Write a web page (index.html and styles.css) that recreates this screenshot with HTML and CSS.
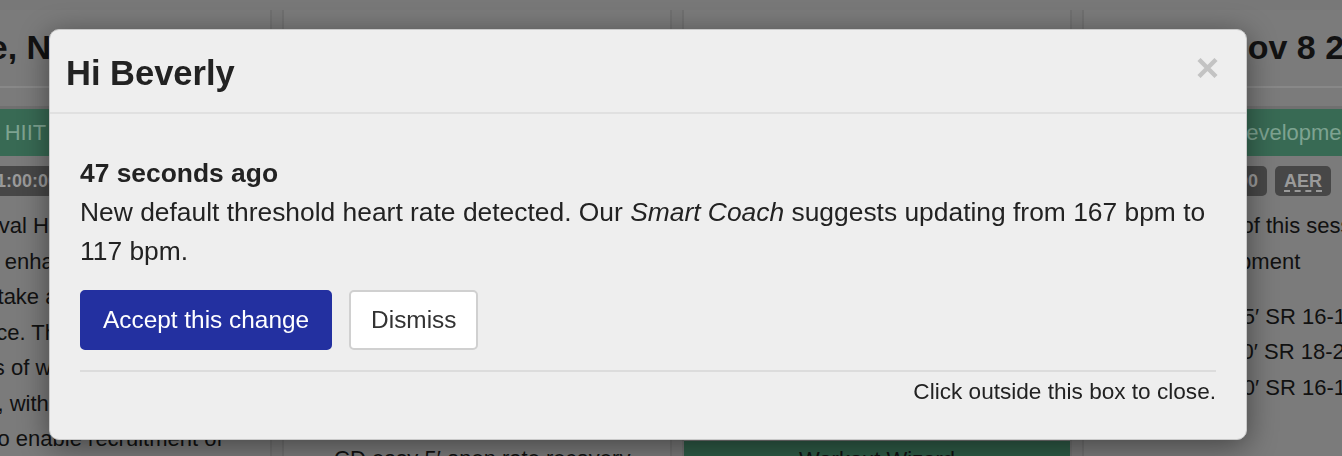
FILE: index.html
```html
<!DOCTYPE html>
<html lang="en">
<head>
<meta charset="utf-8">
<title>Training plan</title>
<link rel="stylesheet" href="styles.css">
</head>
<body>
<main class="week">
  <section class="day">
    <header class="day-head"><h2>Tue, Nov 7 2023</h2></header>
    <div class="bar">HIIT Threshold</div>
    <div class="badges">
      <span class="badge">Rowing</span>
      <span class="badge">1:00:00</span>
      <span class="badge"><abbr title="Anaerobic">ANA</abbr></span>
    </div>
    <p class="desc">Short Interval HIIT to build<br>speed and enhance VO2max<br>oxygen uptake and power<br>performance. The session<br>short bouts of work at high<br>recoveries, with short rests<br>designed to enable recruitment of</p>
  </section>
  <section class="day">
    <header class="day-head"><h2>Tue, Nov 7 2023</h2></header>
    <div class="bar">Technique</div>
    <div class="badges">
      <span class="badge">Rowing</span>
      <span class="badge">0:45:00</span>
      <span class="badge"><abbr title="Aerobic">AER</abbr></span>
    </div>
    <p class="desc">Technical session focused on<br>the catch and the drive<br>sequence at low rate<br>with a relaxed recovery<br>and steady breathing.</p>
    <ul class="plan">
      <li>WU easy 10′ open rate</li>
      <li>CD easy 5′ open rate recovery</li>
    </ul>
  </section>
  <section class="day">
    <header class="day-head"><h2>Wed, Nov 8 2023</h2></header>
    <div class="bar">Recovery</div>
    <div class="badges">
      <span class="badge">Rowing</span>
      <span class="badge">0:30:00</span>
      <span class="badge"><abbr title="Recovery">REC</abbr></span>
    </div>
    <p class="desc">Light paddle to recover from<br>the previous session and<br>keep the body moving<br>while staying fully in<br>the easy heart rate zone.</p>
    <ul class="plan">
      <li>Easy row 30′ SR 18-20</li>
    </ul>
    <button class="wizard" type="button">Workout Wizard</button>
  </section>
  <section class="day">
    <header class="day-head"><h2>Wed, Nov 8 2023</h2></header>
    <div class="bar">Base Development</div>
    <div class="badges">
      <span class="badge">Rowing</span>
      <span class="badge">1:00:00</span>
      <span class="badge"><abbr title="Aerobic">AER</abbr></span>
    </div>
    <p class="desc">The main goal of this session is<br>aerobic development</p>
    <ul class="plan">
      <li>Easy row 15′ SR 16-18</li>
      <li>Hard row 10′ SR 18-20</li>
      <li>Easy row 10′ SR 16-18</li>
    </ul>
  </section>
</main>

<div class="modal" role="dialog" aria-labelledby="modal-title">
  <div class="modal-header">
    <h1 class="modal-title" id="modal-title">Hi Beverly</h1>
    <button class="close" type="button" aria-label="Close">
      <svg width="21" height="20" viewBox="0 0 21 20"><path d="M2 1.5 L19 18.5 M19 1.5 L2 18.5" stroke="#c3c3c3" stroke-width="4.4" fill="none"/></svg>
    </button>
  </div>
  <div class="modal-body">
    <div class="notice-time">47 seconds ago</div>
    <p class="notice-text">New default threshold heart rate detected. Our <em>Smart Coach</em> suggests updating from 167 bpm to 117 bpm.</p>
    <div class="actions">
      <button class="btn btn-primary" type="button">Accept this change</button>
      <button class="btn btn-default" type="button">Dismiss</button>
    </div>
    <hr class="divider">
    <p class="hint">Click outside this box to close.</p>
  </div>
</div>
</body>
</html>
```

FILE: styles.css
```css
html, body {
  margin: 0;
  height: 456px;
  overflow: hidden;
}

body {
  background: #787878;
  font-family: "Liberation Sans", Arial, Helvetica, sans-serif;
  color: #111;
}

/* dimmed background page */
.week {
  display: grid;
  grid-template-columns: 390px 390px 390px 370px;
  gap: 10px;
  margin-left: -118px;
  padding-top: 10px;
}

.day {
  background: #7b7b7b;
  border-left: 2px solid #707070;
  border-right: 2px solid #707070;
  height: 470px;
  overflow: hidden;
}

.day-head {
  padding: 17px 0 19px;
  border-bottom: 2px solid #888888;
  text-align: center;
}

.day-head h2 {
  margin: 0;
  font-size: 34px;
  line-height: 40px;
  font-weight: bold;
  color: #121212;
  white-space: nowrap;
}

.bar {
  margin-top: 21px;
  height: 47px;
  background: #386a54;
  color: #7ea391;
  font-size: 22px;
  line-height: 47px;
  text-align: center;
  white-space: nowrap;
  box-shadow: 0 -3px 0 #707070;
}

.badges {
  display: flex;
  gap: 8px;
  margin: 10px 12px 0;
}

.badge {
  background: #474747;
  color: #9a9a9a;
  font-size: 18px;
  font-weight: bold;
  line-height: 30px;
  padding: 0 9px;
  border-radius: 5px;
  white-space: nowrap;
}

.badge abbr {
  text-decoration: underline dashed #9a9a9a;
  text-underline-offset: 4px;
}

.desc {
  margin: 12px 12px 0;
  font-size: 22px;
  line-height: 35.5px;
  color: #111;
  white-space: nowrap;
}

.plan {
  margin: 19.5px 12px 0;
  padding-left: 38px;
  font-size: 22px;
  line-height: 35.5px;
  color: #111;
  white-space: nowrap;
}

.wizard {
  display: block;
  width: 100%;
  margin: 0;
  border: 0;
  padding: 4px 0;
  background: #2e5b46;
  color: #111;
  font-family: inherit;
  font-size: 22px;
  line-height: 30px;
  text-align: center;
}

/* modal */
.modal {
  position: fixed;
  top: 29px;
  left: 49px;
  width: 1198px;
  box-sizing: border-box;
  background: #eeeeee;
  border: 1px solid #c9c9c9;
  border-radius: 10px;
  box-shadow: 0 6px 30px rgba(0, 0, 0, 0.45);
  color: #222;
}

.modal-header {
  display: flex;
  justify-content: space-between;
  align-items: flex-start;
  padding: 23px 28px 19px 16px;
  border-bottom: 2px solid #e0e0e0;
}

.modal-title {
  margin: 0;
  font-size: 34.5px;
  line-height: 40px;
  font-weight: bold;
  color: #222;
}

.close {
  margin-top: 5px;
  width: 21px;
  height: 20px;
  padding: 0;
  border: 0;
  background: none;
  display: block;
}

.close svg {
  display: block;
}

.modal-body {
  padding: 40px 30px 32px;
}

.notice-time {
  font-size: 26.4px;
  line-height: 39px;
  font-weight: bold;
}

.notice-text {
  margin: 0;
  font-size: 26.4px;
  line-height: 39px;
}

.actions {
  display: flex;
  gap: 17px;
  margin-top: 19px;
}

.btn {
  font-family: inherit;
  font-size: 24.4px;
  line-height: 30px;
  padding: 13px 20px;
  border: 2px solid;
  border-radius: 5px;
}

.btn-primary {
  background: #2330a0;
  border-color: #2330a0;
  color: #fff;
  padding-left: 21px;
  padding-right: 21px;
}

.btn-default {
  background: #fff;
  border-color: #d0d0d0;
  color: #333;
}

.divider {
  margin: 20px 0 0;
  border: 0;
  border-top: 2px solid #dcdcdc;
}

.hint {
  margin: 5px 0 0;
  text-align: right;
  font-size: 22.6px;
  line-height: 30px;
  color: #222;
}
```
